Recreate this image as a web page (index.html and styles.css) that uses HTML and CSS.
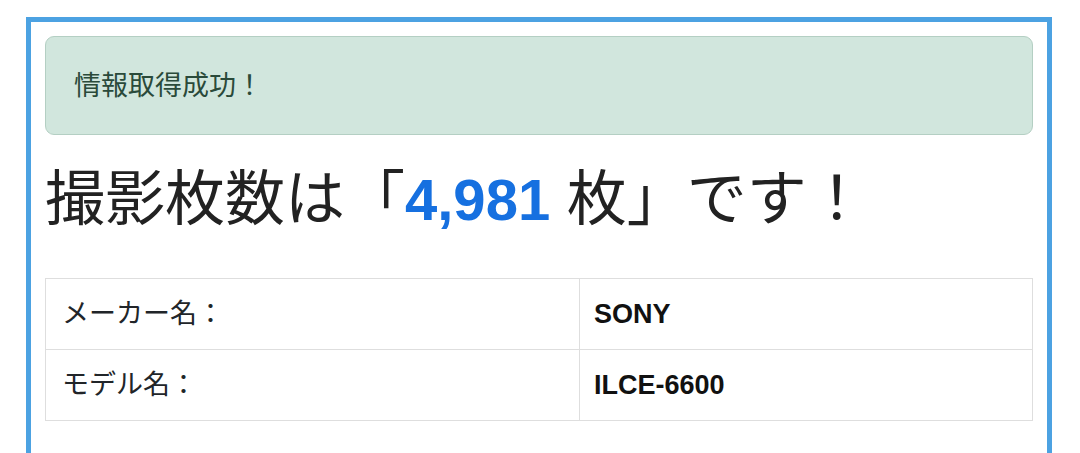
FILE: index.html
```html
<!DOCTYPE html>
<html lang="ja">
<head>
    <meta charset="UTF-8">
    <meta name="viewport" content="width=device-width, initial-scale=1.0">
    <title>撮影枚数チェック</title>
    <link rel="stylesheet" href="styles.css">
</head>
<body>
    <div class="frame">
        <div class="alert-success">情報取得成功！</div>

        <h1 class="shot-count">撮影枚数は「<span class="count">4,981</span> 枚」です！</h1>

        <table class="info-table">
            <tbody>
                <tr>
                    <td class="label">メーカー名：</td>
                    <td class="value">SONY</td>
                </tr>
                <tr>
                    <td class="label">モデル名：</td>
                    <td class="value">ILCE-6600</td>
                </tr>
            </tbody>
        </table>
    </div>
</body>
</html>
```

FILE: styles.css
```css
body {
    margin: 0;
    background-color: white;
    font-family: "Liberation Sans", "Noto Sans CJK JP", sans-serif;
    color: #212529;
}
.frame {
    margin: 17px 28px 0 26px;
    padding: 14px 14px 60px 14px;
    border: 5px solid #4ca2e2;
    border-bottom: none;
}
.alert-success {
    padding: 31px 28px 29px 28px;
    line-height: 37px;
    font-size: 27px;
    color: #2a4a3a;
    background-color: #d1e6dd;
    border: 1px solid #b4cfc3;
    border-radius: 9px;
}
.shot-count {
    margin: 30px 0 43px 0;
    font-size: 60px;
    font-weight: normal;
    line-height: 70px;
    color: #222;
}
.count {
    font-size: 58px;
    color: #1670e0;
    font-weight: bold;
}
.info-table {
    width: 100%;
    border-collapse: collapse;
    font-size: 27px;
}
.info-table td {
    padding: 17px 14px;
    line-height: 36px;
    border: 1px solid #dedede;
}
.info-table .label {
    width: 503px;
    padding-left: 16px;
}
.info-table .value {
    font-weight: bold;
    color: #111;
}
```
